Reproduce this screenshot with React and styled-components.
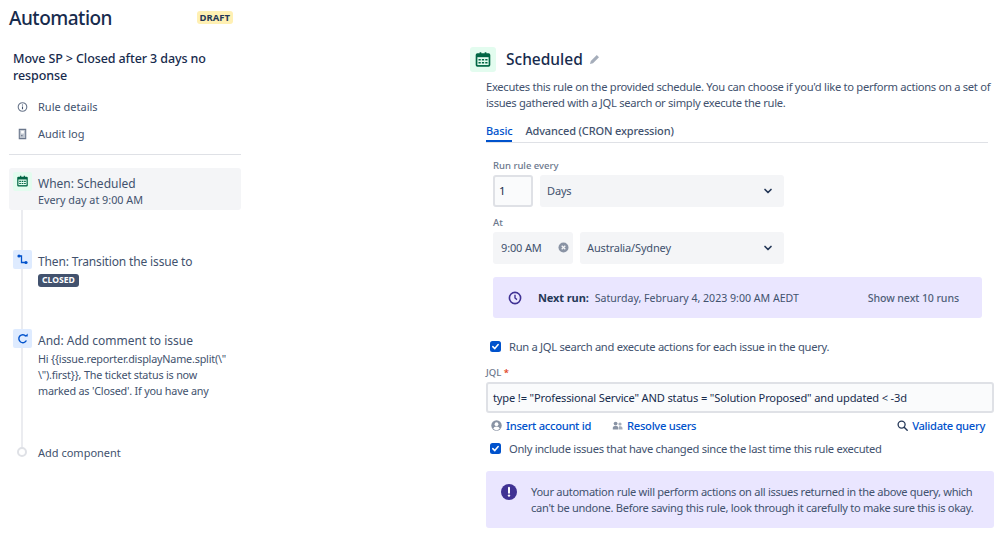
import React from "react";
import styled, { createGlobalStyle } from "styled-components";

const GlobalStyle = createGlobalStyle`
  html, body { margin: 0; padding: 0; background: #fff; }
  body {
    font-family: "Noto Sans", "Open Sans", sans-serif;
    font-size: 12px;
    color: #42526e;
  }
`;

const Page = styled.div`
  width: 999px;
  height: 534px;
  overflow: hidden;
  display: flex;
`;

// left column
const Sidebar = styled.aside`
  width: 232px;
  margin-left: 9px;
  flex-shrink: 0;
`;

const TitleRow = styled.div`
  display: flex;
  justify-content: space-between;
  align-items: flex-start;
  height: 50px;
  padding-top: 5px;
  box-sizing: border-box;
`;

const Title = styled.h1`
  margin: 0;
  font-size: 19px;
  line-height: 27px;
  font-weight: 500;
  letter-spacing: -0.5px;
  color: #172b4d;
`;

const DraftBadge = styled.span`
  margin: 6px 8px 0 0;
  height: 13px;
  padding: 0 3px;
  background: #fff0b3;
  border-radius: 3px;
  font-size: 9.5px;
  line-height: 13px;
  font-weight: 700;
  color: #253858;
`;

const RuleName = styled.h2`
  margin: 0 0 9px 4px;
  font-size: 12.5px;
  line-height: 17px;
  font-weight: 500;
  letter-spacing: -0.1px;
  color: #172b4d;
`;

const NavItem = styled.div`
  display: flex;
  align-items: center;
  height: 27px;
  padding-left: 8px;
  gap: 10px;
  font-size: 11px;
`;

const NavIcon = styled.svg`
  width: 11px;
  height: 12px;
  flex-shrink: 0;
`;

const Divider = styled.hr`
  margin: 7px 0 13px;
  border: 0;
  height: 1px;
  background: #dfe1e6;
`;

const Timeline = styled.div`
  position: relative;
  display: flex;
  flex-direction: column;
  &::before {
    content: "";
    position: absolute;
    left: 12px;
    top: 20px;
    height: 260px;
    width: 2px;
    background: #ebecf0;
  }
`;

const Step = styled.div`
  position: relative;
  display: flex;
  gap: 6px;
  height: ${(p) => p.$height}px;
  margin-top: ${(p) => p.$top || 0}px;
  padding: 4px 4px 0;
  box-sizing: border-box;
  border-radius: 3px;
  background: ${(p) => (p.$active ? "#f4f5f7" : "transparent")};
`;

const StepIcon = styled.div`
  width: 19px;
  height: 19px;
  flex-shrink: 0;
  border-radius: 2px;
  display: flex;
  align-items: center;
  justify-content: center;
  background: ${(p) => p.$bg};
`;

const StepBody = styled.div`
  min-width: 0;
`;

const StepTitle = styled.div`
  font-size: 12px;
  line-height: 17px;
  margin-top: 3px;
  letter-spacing: ${(p) => p.$spacing || 0}px;
`;

const StepText = styled.div`
  font-size: 10.8px;
  line-height: 16px;
  margin-top: ${(p) => p.$top || 0}px;
  letter-spacing: ${(p) => p.$spacing || 0}px;
  white-space: nowrap;
`;

const ClosedBadge = styled.span`
  display: inline-block;
  margin-top: 2px;
  height: 13px;
  padding: 0 4px;
  background: #42526e;
  border-radius: 3px;
  color: #fff;
  font-size: 8.6px;
  line-height: 13px;
  font-weight: 700;
`;

const AddRow = styled.div`
  position: relative;
  display: flex;
  align-items: center;
  gap: 11px;
  padding-left: 8px;
  height: 20px;
  font-size: 11px;
`;

const AddDot = styled.span`
  width: 6px;
  height: 6px;
  border: 2px solid #dfe1e6;
  border-radius: 50%;
  background: #fff;
`;

// right column
const Main = styled.main`
  margin-left: 229px;
  width: 524px;
  padding-top: 47px;
`;

const Header = styled.div`
  display: flex;
  align-items: center;
  height: 25px;
`;

const HeaderIcon = styled.div`
  width: 26px;
  height: 25px;
  border-radius: 3px;
  background: #e3fcef;
  display: flex;
  align-items: center;
  justify-content: center;
`;

const Heading = styled.h2`
  margin: 0 0 0 10px;
  font-size: 15.5px;
  line-height: 27px;
  font-weight: 500;
  color: #172b4d;
`;

const Pencil = styled.svg`
  width: 11px;
  height: 11px;
  margin-left: 6px;
`;

const Content = styled.div`
  margin-left: 16px;
`;

const Description = styled.p`
  margin: 7px 0 0;
  font-size: 11.2px;
  line-height: 16px;
  letter-spacing: -0.3px;
  width: 505px;
  color: #42526e;
`;

const Tabs = styled.div`
  display: flex;
  gap: 13px;
  width: 502px;
  height: 24px;
  margin-top: 7px;
  border-bottom: 1px solid #dfe1e6;
`;

const Tab = styled.div`
  height: 24px;
  font-size: 11px;
  line-height: 26px;
  font-weight: 500;
  letter-spacing: -0.15px;
  color: ${(p) => (p.$active ? "#0052cc" : "#42526e")};
  border-bottom: ${(p) => (p.$active ? "2px solid #0052cc" : "0")};
  box-sizing: border-box;
`;

const Form = styled.div`
  margin-left: 7px;
  width: 489px;
`;

const FieldLabel = styled.div`
  font-size: 9.5px;
  line-height: 12px;
  font-weight: 500;
  color: #6b778c;
  margin: ${(p) => p.$top}px 0 3px;
`;

const FieldRow = styled.div`
  display: flex;
  gap: 7px;
  width: 291px;
`;

const NumberBox = styled.div`
  width: 40px;
  height: 32px;
  box-sizing: border-box;
  border: 2px solid #dfe1e6;
  border-radius: 3px;
  background: #fafbfc;
  padding-left: 4px;
  font-size: 11.5px;
  line-height: 27px;
  color: #172b4d;
`;

const Select = styled.div`
  display: flex;
  align-items: center;
  justify-content: space-between;
  flex: ${(p) => (p.$fixed ? `0 0 ${p.$fixed}px` : 1)};
  height: 32px;
  padding: 0 ${(p) => (p.$fixed ? 4 : 7)}px 1px ${(p) => (p.$fixed ? 8 : 7)}px;
  box-sizing: border-box;
  background: #f4f5f7;
  border-radius: 3px;
  font-size: 11px;
  letter-spacing: -0.15px;
  color: #42526e;
`;

const ClearDot = styled.svg`
  width: 11px;
  height: 11px;
`;

const Chevron = styled.svg`
  width: 10px;
  height: 10px;
  margin-right: 4px;
`;

const NextRun = styled.div`
  display: flex;
  align-items: center;
  height: 41px;
  margin-top: 13px;
  padding: 0 23px 0 15px;
  border-radius: 3px;
  background: #eae6ff;
  font-size: 10.6px;
`;

const NextRunLabel = styled.strong`
  margin: 0 6px 0 16px;
  font-weight: 700;
  font-size: 11px;
  letter-spacing: -0.1px;
  color: #253858;
`;

const ShowNext = styled.span`
  margin-left: auto;
  font-weight: 500;
  letter-spacing: -0.1px;
  color: #505f79;
`;

const CheckRow = styled.div`
  display: flex;
  align-items: center;
  gap: 8px;
  height: 16px;
  margin: ${(p) => p.$top}px 0 0 4px;
  font-size: 11.2px;
  letter-spacing: -0.3px;
  color: #42526e;
`;

const CheckBox = styled.span`
  width: 11px;
  height: 11px;
  border-radius: 2.5px;
  background: #0052cc;
  display: flex;
  align-items: center;
  justify-content: center;
  flex-shrink: 0;
`;

const JqlLabel = styled.div`
  margin-top: 13px;
  font-size: 9.5px;
  line-height: 12px;
  font-weight: 500;
  color: #6b778c;
  span { color: #de350b; }
`;

const JqlInput = styled.div`
  width: 508px;
  height: 31px;
  margin-top: 3px;
  padding-left: 5px;
  box-sizing: border-box;
  border: 2px solid #dfe1e6;
  border-radius: 3px;
  background: #fafbfc;
  font-size: 11.1px;
  letter-spacing: -0.16px;
  line-height: 27px;
  color: #172b4d;
  white-space: nowrap;
`;

const LinkRow = styled.div`
  display: flex;
  align-items: center;
  width: 494px;
  height: 16px;
  margin: 4px 0 0 5px;
  gap: 21px;
`;

const LinkItem = styled.a`
  display: flex;
  align-items: center;
  gap: 4px;
  font-size: 11.2px;
  font-weight: 500;
  letter-spacing: -0.3px;
  color: #0052cc;
  margin-left: ${(p) => (p.$right ? "auto" : "0")};
`;

const Notice = styled.div`
  display: flex;
  align-items: flex-start;
  width: 508px;
  height: 57px;
  margin-top: 15px;
  padding: 13px 0 0 15px;
  box-sizing: border-box;
  border-radius: 3px;
  background: #eae6ff;
`;

const NoticeIcon = styled.svg`
  width: 16px;
  height: 16px;
  flex-shrink: 0;
`;

const NoticeText = styled.p`
  margin: 0 0 0 14px;
  font-size: 11.1px;
  line-height: 16px;
  letter-spacing: -0.3px;
  white-space: nowrap;
  color: #42526e;
`;

function CalendarIcon({ size }) {
  return (
    <svg width={size} height={size} viewBox="0 0 16 16">
      <path fill="#006644" d="M3 2h2V1h1.5v1h3V1H11v1h2a1.5 1.5 0 0 1 1.5 1.5v9A1.5 1.5 0 0 1 13 14H3a1.5 1.5 0 0 1-1.5-1.5v-9A1.5 1.5 0 0 1 3 2z" />
      <path fill="#e3fcef" d="M3 5.5h10v7H3z" />
      <path fill="#006644" d="M4 7h2v1.5H4zM7 7h2v1.5H7zM10 7h2v1.5h-2zM4 9.7h2v1.5H4zM7 9.7h2v1.5H7zM10 9.7h2v1.5h-2z" />
    </svg>
  );
}

function ChevronDown() {
  return (
    <Chevron viewBox="0 0 10 10">
      <path d="M2 3.5l3 3 3-3" fill="none" stroke="#253858" strokeWidth="1.7" strokeLinecap="round" strokeLinejoin="round" />
    </Chevron>
  );
}

function Check() {
  return (
    <svg width="9" height="9" viewBox="0 0 9 9">
      <path d="M1.8 4.6l2 2 3.4-4" fill="none" stroke="#fff" strokeWidth="1.5" strokeLinecap="round" strokeLinejoin="round" />
    </svg>
  );
}

export default function App() {
  return (
    <Page>
      <GlobalStyle />
      <Sidebar>
        <TitleRow>
          <Title>Automation</Title>
          <DraftBadge>DRAFT</DraftBadge>
        </TitleRow>
        <RuleName>Move SP &gt; Closed after 3 days no response</RuleName>
        <NavItem>
          <NavIcon viewBox="0 0 12 12">
            <circle cx="6" cy="6" r="4.7" fill="none" stroke="#6b778c" strokeWidth="1.2" />
            <path d="M6 5.4v3M6 3.4v1" stroke="#42526e" strokeWidth="1.2" />
          </NavIcon>
          Rule details
        </NavItem>
        <NavItem>
          <NavIcon viewBox="0 0 12 12">
            <path d="M2.5 1h7v10h-7z" fill="#c1c7d0" stroke="#6b778c" strokeWidth="1.2" />
            <path d="M4.5 2.5h3v3h-3z" fill="#fff" />
            <path d="M4.5 7h1.5v1.5H4.5z" fill="#6b778c" />
          </NavIcon>
          Audit log
        </NavItem>
        <Divider />
        <Timeline>
          <Step $active $height={42}>
            <StepIcon $bg="#e3fcef">
              <CalendarIcon size={13} />
            </StepIcon>
            <StepBody>
              <StepTitle>When: Scheduled</StepTitle>
              <StepText>Every day at 9:00 AM</StepText>
            </StepBody>
          </Step>
          <Step $height={79} $top={36}>
            <StepIcon $bg="#deebff">
              <svg width="13" height="13" viewBox="0 0 13 13">
                <path d="M3 3h2.5v6.5H10" fill="none" stroke="#0052cc" strokeWidth="1.3" />
                <circle cx="3" cy="3" r="1.6" fill="#0052cc" />
                <circle cx="10" cy="9.5" r="1.6" fill="#0052cc" />
              </svg>
            </StepIcon>
            <StepBody>
              <StepTitle $spacing={-0.15}>Then: Transition the issue to</StepTitle>
              <ClosedBadge>CLOSED</ClosedBadge>
            </StepBody>
          </Step>
          <Step $height={117}>
            <StepIcon $bg="#deebff">
              <svg width="13" height="13" viewBox="0 0 13 13">
                <path d="M9.8 4a4 4 0 1 0 .6 4.5" fill="none" stroke="#0052cc" strokeWidth="1.4" />
                <path d="M8.5 4.6h3.2V1.6z" fill="#0052cc" />
              </svg>
            </StepIcon>
            <StepBody>
              <StepTitle>And: Add comment to issue</StepTitle>
              <StepText $top={2} $spacing={-0.2}>
                Hi {"{{issue.reporter.displayName.split(\\\""}
                <br />
                {"\\\").first}}"}, The ticket status is now
                <br />
                marked as 'Closed'. If you have any
              </StepText>
            </StepBody>
          </Step>
          <AddRow>
            <AddDot />
            Add component
          </AddRow>
        </Timeline>
      </Sidebar>

      <Main>
        <Header>
          <HeaderIcon>
            <CalendarIcon size={18} />
          </HeaderIcon>
          <Heading>Scheduled</Heading>
          <Pencil viewBox="0 0 11 11">
            <path d="M7.8 1l2.2 2.2-6 6L1 10l.8-3z" fill="#a5adba" />
          </Pencil>
        </Header>
        <Content>
          <Description>
            Executes this rule on the provided schedule. You can choose if you'd like to perform actions on a set of issues gathered with a JQL search or simply execute the rule.
          </Description>
          <Tabs>
            <Tab $active>Basic</Tab>
            <Tab>Advanced (CRON expression)</Tab>
          </Tabs>
          <Form>
            <FieldLabel $top={17}>Run rule every</FieldLabel>
            <FieldRow>
              <NumberBox>1</NumberBox>
              <Select>
                Days
                <ChevronDown />
              </Select>
            </FieldRow>
            <FieldLabel $top={10}>At</FieldLabel>
            <FieldRow>
              <Select $fixed={80}>
                9:00 AM
                <ClearDot viewBox="0 0 11 11">
                  <circle cx="5.5" cy="5.5" r="5" fill="#8993a4" />
                  <path d="M3.7 3.7l3.6 3.6M7.3 3.7l-3.6 3.6" stroke="#f4f5f7" strokeWidth="1.3" />
                </ClearDot>
              </Select>
              <Select>
                Australia/Sydney
                <ChevronDown />
              </Select>
            </FieldRow>
            <NextRun>
              <svg width="14" height="14" viewBox="0 0 14 14">
                <circle cx="7" cy="7" r="5.6" fill="none" stroke="#403294" strokeWidth="1.6" />
                <path d="M7 3.8V7l2 1.6" fill="none" stroke="#403294" strokeWidth="1.4" />
              </svg>
              <NextRunLabel>Next run:</NextRunLabel>
              Saturday, February 4, 2023 9:00 AM AEDT
              <ShowNext>Show next 10 runs</ShowNext>
            </NextRun>
          </Form>
          <CheckRow $top={20}>
            <CheckBox>
              <Check />
            </CheckBox>
            Run a JQL search and execute actions for each issue in the query.
          </CheckRow>
          <JqlLabel>
            JQL <span>*</span>
          </JqlLabel>
          <JqlInput>type != "Professional Service" AND status = "Solution Proposed" and updated &lt; -3d</JqlInput>
          <LinkRow>
            <LinkItem>
              <svg width="11" height="11" viewBox="0 0 11 11">
                <circle cx="5.5" cy="5.5" r="5.2" fill="#8993a4" />
                <circle cx="5.5" cy="4.2" r="1.9" fill="#fff" />
                <path d="M2.2 8.8a3.4 3 0 0 1 6.6 0 5 5 0 0 1-6.6 0z" fill="#fff" />
              </svg>
              Insert account id
            </LinkItem>
            <LinkItem>
              <svg width="11" height="11" viewBox="0 0 11 11">
                <circle cx="3.6" cy="3.6" r="1.9" fill="#8993a4" />
                <circle cx="8" cy="4" r="1.6" fill="#a5adba" />
                <path d="M.8 9.5V7.6a2 2 0 0 1 2-1.6h1.6a2 2 0 0 1 2 1.6v1.9z" fill="#8993a4" />
                <path d="M7 9.5V6.2h1.5a2 2 0 0 1 2 1.5v1.8z" fill="#a5adba" />
              </svg>
              Resolve users
            </LinkItem>
            <LinkItem $right>
              <svg width="11" height="11" viewBox="0 0 11 11">
                <circle cx="4.6" cy="4.6" r="3.5" fill="none" stroke="#253858" strokeWidth="1.3" />
                <path d="M7.2 7.2l3 3" stroke="#253858" strokeWidth="1.4" strokeLinecap="round" />
              </svg>
              Validate query
            </LinkItem>
          </LinkRow>
          <CheckRow $top={7}>
            <CheckBox>
              <Check />
            </CheckBox>
            Only include issues that have changed since the last time this rule executed
          </CheckRow>
          <Notice>
            <NoticeIcon viewBox="0 0 16 16">
              <circle cx="8" cy="8" r="8" fill="#403294" />
              <path d="M8 3.8v5" stroke="#fff" strokeWidth="2" strokeLinecap="round" />
              <circle cx="8" cy="11.6" r="1.2" fill="#fff" />
            </NoticeIcon>
            <NoticeText>
              Your automation rule will perform actions on all issues returned in the above query, which
              <br />
              can't be undone. Before saving this rule, look through it carefully to make sure this is okay.
            </NoticeText>
          </Notice>
        </Content>
      </Main>
    </Page>
  );
}
